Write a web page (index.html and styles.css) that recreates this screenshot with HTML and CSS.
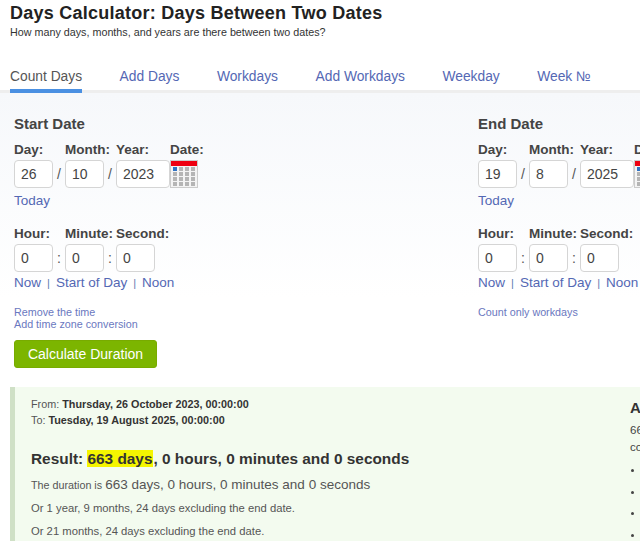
FILE: index.html
```html
<!DOCTYPE html>
<html lang="en">
<head>
    <meta charset="UTF-8">
    <meta name="viewport" content="width=device-width, initial-scale=1.0">
    <title>Days Calculator: Days Between Two Dates</title>
    <link rel="stylesheet" href="styles.css">
</head>
<body>
    <svg class="icon-defs" width="0" height="0">
        <symbol id="calendar" viewBox="0 0 28 28">
            <rect x="0.5" y="0.5" width="27" height="27" fill="#f4f4f4" stroke="#ccc"/>
            <rect x="1" y="1" width="26" height="5" fill="#ee0011"/>
            <g fill="#b5b5b5">
                <rect x="3" y="7" width="4" height="4" fill="#2f73c4"/>
                <rect x="9" y="7" width="4" height="4"/><rect x="15" y="7" width="4" height="4"/><rect x="21" y="7" width="4" height="4"/>
                <rect x="3" y="12" width="4" height="4"/><rect x="9" y="12" width="4" height="4"/><rect x="15" y="12" width="4" height="4"/><rect x="21" y="12" width="4" height="4"/>
                <rect x="3" y="17" width="4" height="4"/><rect x="9" y="17" width="4" height="4"/><rect x="15" y="17" width="4" height="4"/><rect x="21" y="17" width="4" height="4"/>
                <rect x="3" y="22" width="4" height="4"/><rect x="9" y="22" width="4" height="4"/><rect x="15" y="22" width="4" height="4"/><rect x="21" y="22" width="4" height="4"/>
            </g>
        </symbol>
    </svg>

    <header class="page-head">
        <h1>Days Calculator: Days Between Two Dates</h1>
        <p>How many days, months, and years are there between two dates?</p>
    </header>

    <nav class="tabs">
        <a class="tab active" href="#">Count Days</a>
        <a class="tab" href="#">Add Days</a>
        <a class="tab" href="#">Workdays</a>
        <a class="tab" href="#">Add Workdays</a>
        <a class="tab" href="#">Weekday</a>
        <a class="tab" href="#">Week №</a>
    </nav>

    <form class="panel">
        <div class="columns">
            <section class="date-col">
                <h2>Start Date</h2>
                <div class="field-row labels">
                    <span class="cell">Day:</span>
                    <span class="cell">Month:</span>
                    <span class="cell year-cell">Year:</span>
                    <span>Date:</span>
                </div>
                <div class="field-row">
                    <input class="cell-input" type="text" value="26">
                    <span class="sep">/</span>
                    <input class="cell-input" type="text" value="10">
                    <span class="sep">/</span>
                    <input class="cell-input year" type="text" value="2023">
                    <svg class="cal" width="28" height="28"><use href="#calendar"/></svg>
                </div>
                <a class="quick today" href="#">Today</a>
                <div class="field-row labels time-labels">
                    <span class="cell">Hour:</span>
                    <span class="cell">Minute:</span>
                    <span class="cell">Second:</span>
                </div>
                <div class="field-row">
                    <input class="cell-input" type="text" value="0">
                    <span class="sep">:</span>
                    <input class="cell-input" type="text" value="0">
                    <span class="sep">:</span>
                    <input class="cell-input" type="text" value="0">
                </div>
                <div class="quick-row">
                    <a class="quick" href="#">Now</a><span class="pipe">|</span><a class="quick" href="#">Start of Day</a><span class="pipe">|</span><a class="quick" href="#">Noon</a>
                </div>
                <div class="small-links">
                    <a href="#">Remove the time</a>
                    <a href="#">Add time zone conversion</a>
                </div>
                <button class="calc-btn" type="button">Calculate Duration</button>
            </section>

            <section class="date-col">
                <h2>End Date</h2>
                <div class="field-row labels">
                    <span class="cell">Day:</span>
                    <span class="cell">Month:</span>
                    <span class="cell year-cell">Year:</span>
                    <span>Date:</span>
                </div>
                <div class="field-row">
                    <input class="cell-input" type="text" value="19">
                    <span class="sep">/</span>
                    <input class="cell-input" type="text" value="8">
                    <span class="sep">/</span>
                    <input class="cell-input year" type="text" value="2025">
                    <svg class="cal" width="28" height="28"><use href="#calendar"/></svg>
                </div>
                <a class="quick today" href="#">Today</a>
                <div class="field-row labels time-labels">
                    <span class="cell">Hour:</span>
                    <span class="cell">Minute:</span>
                    <span class="cell">Second:</span>
                </div>
                <div class="field-row">
                    <input class="cell-input" type="text" value="0">
                    <span class="sep">:</span>
                    <input class="cell-input" type="text" value="0">
                    <span class="sep">:</span>
                    <input class="cell-input" type="text" value="0">
                </div>
                <div class="quick-row">
                    <a class="quick" href="#">Now</a><span class="pipe">|</span><a class="quick" href="#">Start of Day</a><span class="pipe">|</span><a class="quick" href="#">Noon</a>
                </div>
                <div class="small-links">
                    <a href="#">Count only workdays</a>
                </div>
            </section>
        </div>
    </form>

    <section class="result">
        <div class="result-main">
            <p class="range">From: <b>Thursday, 26 October 2023, 00:00:00</b></p>
            <p class="range">To: <b>Tuesday, 19 August 2025, 00:00:00</b></p>
            <h3>Result: <mark>663 days</mark>, 0 hours, 0 minutes and 0 seconds</h3>
            <p class="line"><span class="lead">The duration is</span> <span class="big">663 days, 0 hours, 0 minutes and 0 seconds</span></p>
            <p class="line">Or 1 year, 9 months, 24 days excluding the end date.</p>
            <p class="line">Or 21 months, 24 days excluding the end date.</p>
        </div>
        <aside class="result-side">
            <h4>Alternative Time Units</h4>
            <p>663 days can be<br>converted to:</p>
            <ul>
                <li>57,283,200 seconds</li>
                <li>954,720 minutes</li>
                <li>15,912 hours</li>
                <li>94 weeks</li>
            </ul>
        </aside>
    </section>
</body>
</html>
```

FILE: styles.css
```css
html, body {
    height: 100%;
    overflow: hidden;
}
body {
    margin: 0;
    width: 640px;
    font-family: "Liberation Sans", Arial, sans-serif;
    color: #444;
    background: white;
}
a {
    color: #5468b4;
    text-decoration: none;
}
.icon-defs {
    display: block;
}
.page-head {
    padding: 2px 10px 0;
}
h1 {
    margin: 0;
    font-size: 18px;
    line-height: 22px;
    letter-spacing: 0.25px;
    color: #222;
}
.page-head p {
    margin: 2px 0 0;
    font-size: 10.75px;
    line-height: 13px;
    color: #333;
}
.tabs {
    display: flex;
    gap: 37.5px;
    margin-top: 29px;
    padding-left: 10px;
    border-bottom: 3px solid #eeeeee;
}
.tab {
    font-size: 13.8px;
    line-height: 17px;
    padding: 0 0 4px;
    margin-bottom: -3px;
    border-bottom: 4px solid transparent;
}
.tab.active {
    color: #555;
    border-bottom-color: #4a90e2;
}
.panel {
    height: 294px;
    padding: 22px 0 0 14px;
    box-sizing: border-box;
    background: linear-gradient(#f6f8fb, #ffffff 70%);
}
.columns {
    display: flex;
}
.date-col {
    flex: 0 0 464px;
}
h2 {
    margin: 0 0 8px;
    font-size: 15px;
    line-height: 18px;
    color: #444;
}
.field-row {
    display: flex;
    align-items: center;
}
.labels {
    font-size: 13.5px;
    font-weight: bold;
    line-height: 17px;
    margin-bottom: 2px;
    color: #444;
    white-space: nowrap;
}
.cell {
    width: 51px;
}
.year-cell {
    width: 54px;
}
.time-labels {
    margin-top: 16px;
}
.cell-input {
    box-sizing: border-box;
    width: 39px;
    height: 28px;
    padding: 0 6px;
    border: 1px solid #d5d5d5;
    border-radius: 4px;
    background: white;
    font-family: inherit;
    font-size: 14px;
    color: #444;
}
.cell-input.year {
    width: 54px;
}
.sep {
    width: 12px;
    text-align: center;
    font-size: 14px;
    color: #555;
}
.cal {
    flex: none;
    display: block;
}
.quick {
    font-size: 13.5px;
    line-height: 17px;
}
.today {
    display: block;
    margin-top: 4px;
}
.quick-row {
    margin-top: 1px;
    line-height: 17px;
    white-space: nowrap;
}
.pipe {
    margin: 0 6px;
    font-size: 11px;
    color: #5c7ab0;
}
.small-links {
    margin-top: 14px;
    font-size: 10.75px;
    line-height: 12px;
}
.small-links a {
    display: block;
    color: #6a78c0;
}
.calc-btn {
    display: block;
    margin-top: 10px;
    width: 143px;
    height: 28px;
    padding: 0;
    border: 1px solid #78ab00;
    border-radius: 3px;
    background: #7cb500;
    font-family: inherit;
    font-size: 14px;
    color: white;
}
.result {
    display: flex;
    margin-left: 10px;
    height: 170px;
    border-left: 5px solid #cfe0c6;
    background: #f3fbef;
}
.result-main {
    flex: 0 0 615px;
    box-sizing: border-box;
    padding: 9px 0 0 16px;
}
.range {
    margin: 0;
    font-size: 10.8px;
    line-height: 16px;
    color: #555;
}
.range b {
    color: #333;
}
h3 {
    margin: 21px 0 0;
    font-size: 15.4px;
    line-height: 20px;
    color: #333;
}
mark {
    padding-right: 1px;
    background: #f5f500;
    color: #333;
}
.line {
    margin: 7px 0 0;
    font-size: 11.25px;
    line-height: 16px;
    color: #555;
}
h3 + .line {
    margin-top: 8px;
}
.lead {
    font-size: 10.75px;
}
.big {
    font-size: 13.5px;
}
.result-side {
    padding-top: 12px;
    white-space: nowrap;
    font-size: 11.5px;
}
h4 {
    margin: 0 0 5px;
    font-size: 15px;
    line-height: 18px;
    color: #333;
}
.result-side p {
    margin: 0;
    line-height: 17px;
}
.result-side ul {
    margin: 3px 0 0;
    padding-left: 14px;
}
.result-side li {
    line-height: 21.5px;
}
```
